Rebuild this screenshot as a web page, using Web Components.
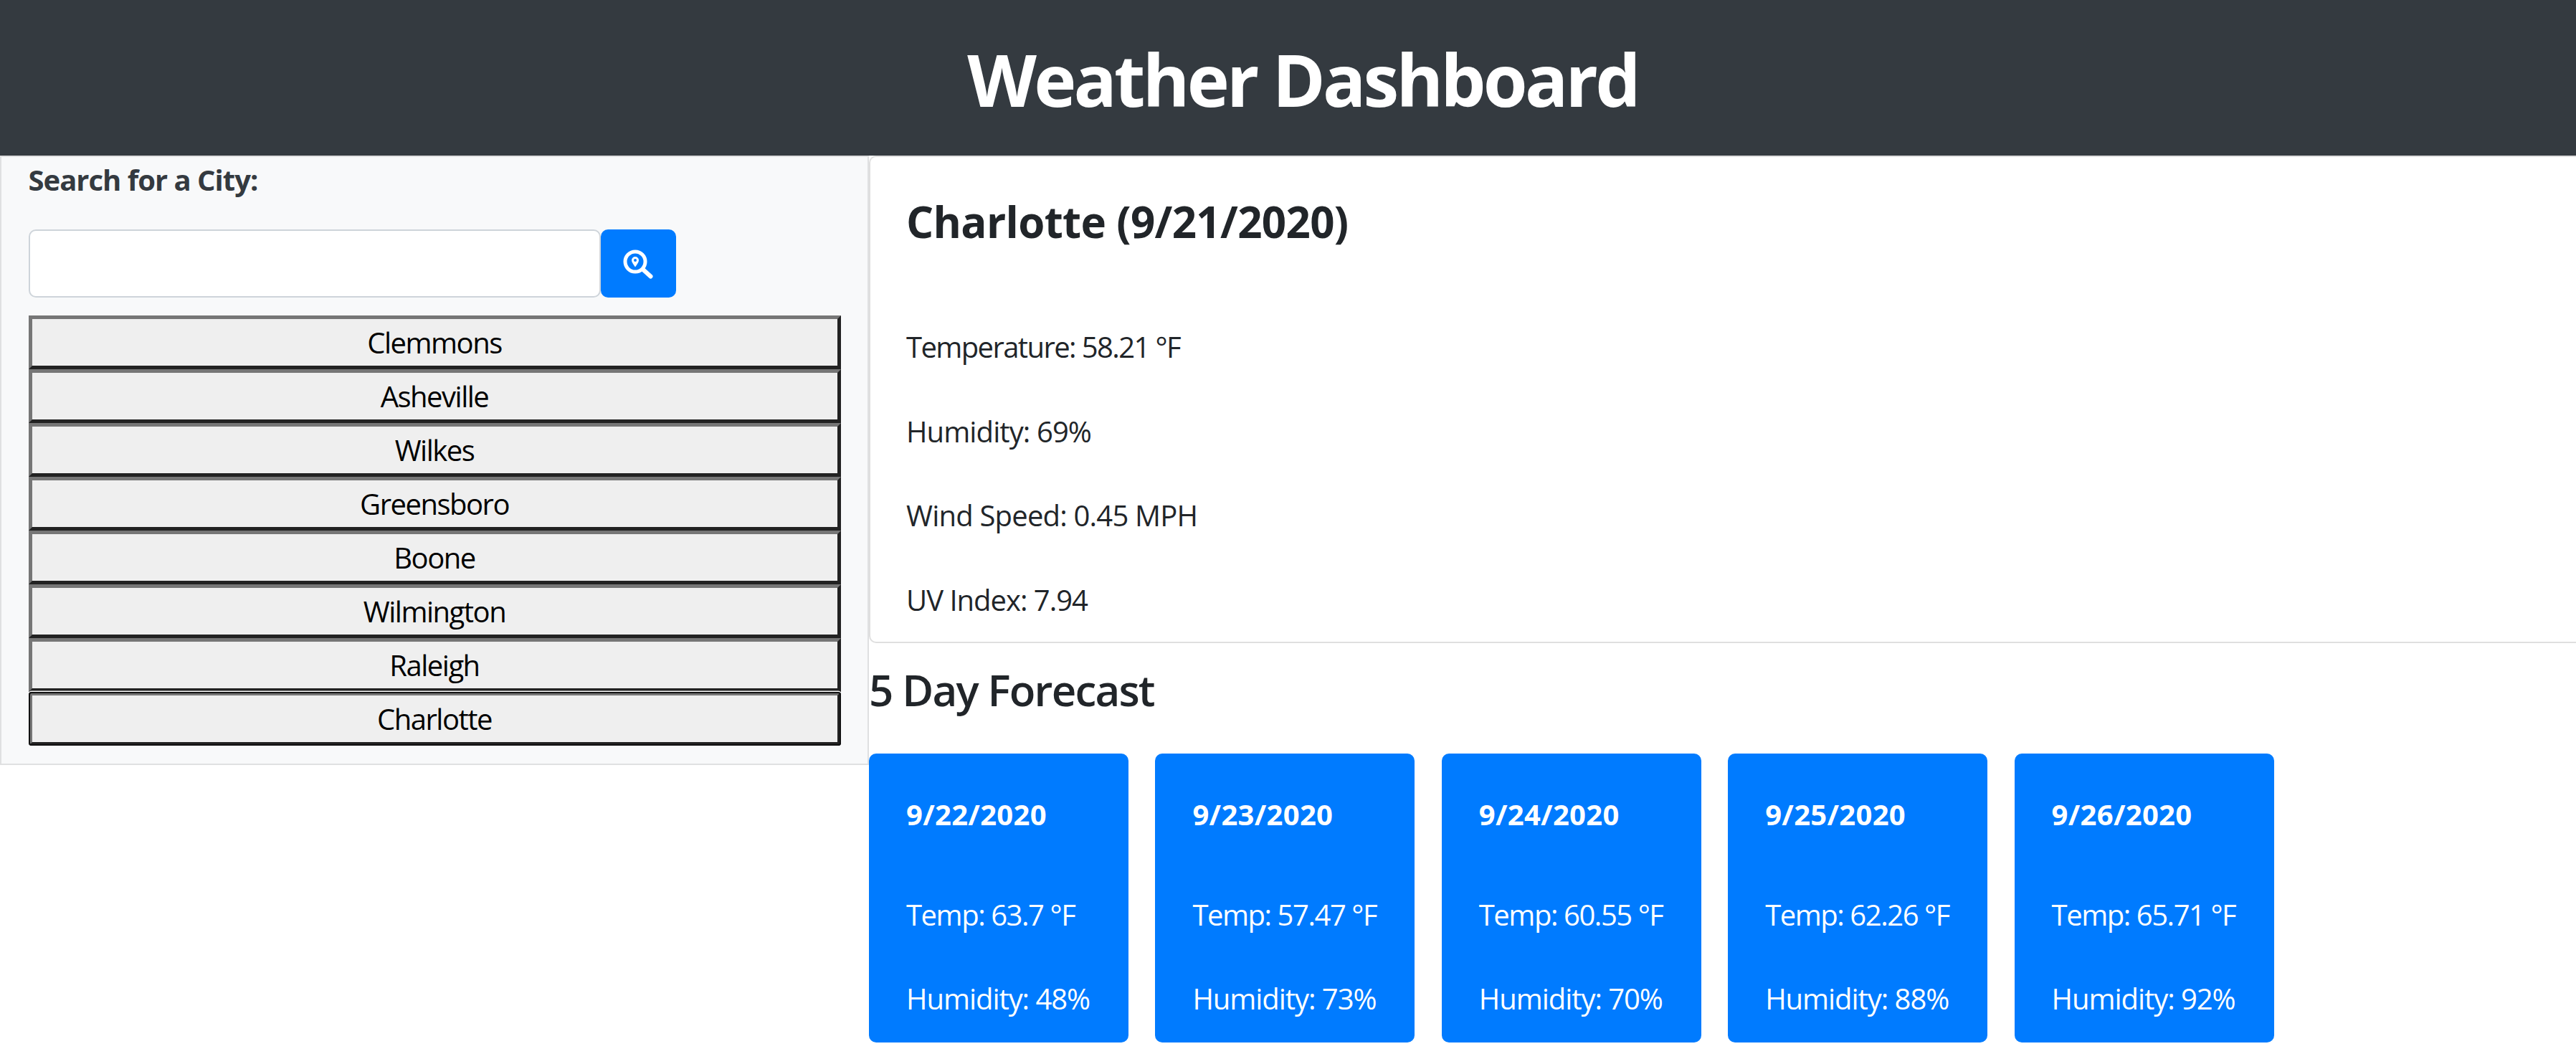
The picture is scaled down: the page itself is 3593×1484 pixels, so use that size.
<!DOCTYPE html>
<html>
<head>
<meta charset="utf-8">
<title>Weather Dashboard</title>
<style>
    html, body { margin: 0; padding: 0; background: #fff; }
    body { font-family: "Open Sans", "Noto Sans", sans-serif; font-size: 40px; line-height: 1.5; color: #212529; overflow: hidden; }
</style>
</head>
<body>
<weather-app>
    <app-header slot="header">Weather Dashboard</app-header>
    <search-panel slot="side">
        <city-button>Clemmons</city-button>
        <city-button>Asheville</city-button>
        <city-button>Wilkes</city-button>
        <city-button>Greensboro</city-button>
        <city-button>Boone</city-button>
        <city-button>Wilmington</city-button>
        <city-button>Raleigh</city-button>
        <city-button focused>Charlotte</city-button>
    </search-panel>
    <current-weather slot="main" heading="Charlotte (9/21/2020)">
        <p style="letter-spacing:-1.6px">Temperature: 58.21 °F</p>
        <p style="letter-spacing:-.9px">Humidity: 69%</p>
        <p style="letter-spacing:-.8px">Wind Speed: 0.45 MPH</p>
        <p style="letter-spacing:-1px">UV Index: 7.94</p>
    </current-weather>
    <forecast-list slot="main" heading="5 Day Forecast">
        <forecast-card date="9/22/2020" temp="63.7" humidity="48"></forecast-card>
        <forecast-card date="9/23/2020" temp="57.47" humidity="73"></forecast-card>
        <forecast-card date="9/24/2020" temp="60.55" humidity="70"></forecast-card>
        <forecast-card date="9/25/2020" temp="62.26" humidity="88"></forecast-card>
        <forecast-card date="9/26/2020" temp="65.71" humidity="92"></forecast-card>
    </forecast-list>
</weather-app>

<script>
class WeatherApp extends HTMLElement {
    constructor() {
        super();
        this.attachShadow({ mode: 'open' });
        this.shadowRoot.innerHTML = `
            <style>
                :host { display: block; }
                .row { display: flex; align-items: flex-start; }
                .side { flex: 0 0 1212px; }
                .main { flex: 1; min-width: 0; }
            </style>
            <slot name="header"></slot>
            <div class="row">
                <div class="side"><slot name="side"></slot></div>
                <div class="main"><slot name="main"></slot></div>
            </div>
        `;
    }
}

class AppHeader extends HTMLElement {
    constructor() {
        super();
        this.attachShadow({ mode: 'open' });
        this.shadowRoot.innerHTML = `
            <style>
                :host { display: block; background: #343a40; color: #fff; height: 217px; }
                h1 { margin: 0; padding: 4px 0 0 41px; text-align: center; font-size: 100px; font-weight: 700; letter-spacing: -3.8px; line-height: 213px; }
            </style>
            <h1><slot></slot></h1>
        `;
    }
}

class SearchPanel extends HTMLElement {
    constructor() {
        super();
        this.attachShadow({ mode: 'open' });
        this.shadowRoot.innerHTML = `
            <style>
                :host { display: block; box-sizing: border-box; background: #f8f9fa; border: 2.5px solid #dfe0e1; border-top-width: 2px; height: 850px; padding: 2px 37.5px 0; }
                label { display: block; font-weight: 700; color: #343a40; letter-spacing: -1px; height: 99px; line-height: 60px; }
                .search { display: flex; height: 95px; margin-bottom: 25px; }
                input { box-sizing: border-box; width: 798px; height: 95px; border: 2.5px solid #ced4da; border-radius: 10px; background: #fff; padding: 0; font: inherit; outline: none; }
                button { box-sizing: border-box; width: 105px; height: 95px; border: 0; border-radius: 10px; background: #007bff; padding: 0; display: flex; align-items: center; justify-content: center; }
                .cities { display: flex; flex-direction: column; }
            </style>
            <label for="city">Search for a City:</label>
            <div class="search">
                <input id="city" type="text">
                <button aria-label="Search">
                    <svg width="60" height="60" viewBox="0 0 60 60">
                        <circle cx="26" cy="27" r="14" fill="none" stroke="#fff" stroke-width="5"/>
                        <line x1="37" y1="38" x2="47.5" y2="47.5" stroke="#fff" stroke-width="6" stroke-linecap="round"/>
                        <path d="M26 34.5 C23 30 21 27.5 21 25 A5 5 0 0 1 31 25 C31 27.5 29 30 26 34.5 Z M26 23 A2 2 0 1 0 26 27 A2 2 0 1 0 26 23 Z" fill="#fff" fill-rule="evenodd"/>
                    </svg>
                </button>
            </div>
            <div class="cities"><slot></slot></div>
        `;
    }
}

class CityButton extends HTMLElement {
    constructor() {
        super();
        this.attachShadow({ mode: 'open' });
        this.shadowRoot.innerHTML = `
            <style>
                :host { display: block; }
                button { display: block; box-sizing: border-box; width: 100%; height: 75px; padding: 0; margin: 0; font: inherit; letter-spacing: -1.5px; line-height: 60px; color: #000; background: #efefef; border: 5px solid; border-color: #767676 #222 #222 #767676; }
                :host([focused]) button { border-radius: 4px; outline: 2.5px solid #111; outline-offset: -2.5px; box-shadow: 0 -1.5px 0 #fff; }
            </style>
            <button><slot></slot></button>
        `;
    }
}

class CurrentWeather extends HTMLElement {
    constructor() {
        super();
        this.attachShadow({ mode: 'open' });
        this.shadowRoot.innerHTML = `
            <style>
                :host { display: block; box-sizing: border-box; height: 680px; background: #fff; border: 2.5px solid #dfdfdf; border-right: 0; border-radius: 10px 0 0 10px; padding: 48px 50px 0; }
                h3 { margin: 0 0 103px; font-size: 60px; font-weight: 700; letter-spacing: -.65px; line-height: 84px; }
                ::slotted(p) { margin: 0 0 57.5px; line-height: 60px; }
            </style>
            <h3></h3>
            <slot></slot>
        `;
        this.shadowRoot.querySelector('h3').textContent = this.getAttribute('heading');
    }
}

class ForecastList extends HTMLElement {
    constructor() {
        super();
        this.attachShadow({ mode: 'open' });
        this.shadowRoot.innerHTML = `
            <style>
                :host { display: block; }
                h3 { margin: 20px 0 44px; font-size: 60px; font-weight: 600; letter-spacing: -1.8px; line-height: 90px; }
                .cards { display: flex; gap: 37.4px; }
            </style>
            <h3></h3>
            <div class="cards"><slot></slot></div>
        `;
        this.shadowRoot.querySelector('h3').textContent = this.getAttribute('heading');
    }
}

class ForecastCard extends HTMLElement {
    constructor() {
        super();
        this.attachShadow({ mode: 'open' });
        this.shadowRoot.innerHTML = `
            <style>
                :host { display: block; box-sizing: border-box; width: 362px; height: 403px; background: #007bff; color: #fff; border-radius: 10px; padding: 55px 0 0 52px; }
                h5 { margin: 0 0 80px; font-size: 40px; font-weight: 700; letter-spacing: .3px; line-height: 60px; }
                p { margin: 0 0 57px; line-height: 60px; white-space: nowrap; }
                .temp { letter-spacing: -1.45px; }
                .hum { letter-spacing: -1.05px; }
            </style>
            <h5></h5>
            <p class="temp"></p>
            <p class="hum"></p>
        `;
        this.shadowRoot.querySelector('h5').textContent = this.getAttribute('date');
        this.shadowRoot.querySelector('.temp').textContent = `Temp: ${this.getAttribute('temp')} °F`;
        this.shadowRoot.querySelector('.hum').textContent = `Humidity: ${this.getAttribute('humidity')}%`;
    }
}

customElements.define('weather-app', WeatherApp);
customElements.define('app-header', AppHeader);
customElements.define('search-panel', SearchPanel);
customElements.define('city-button', CityButton);
customElements.define('current-weather', CurrentWeather);
customElements.define('forecast-list', ForecastList);
customElements.define('forecast-card', ForecastCard);
</script>
</body>
</html>
